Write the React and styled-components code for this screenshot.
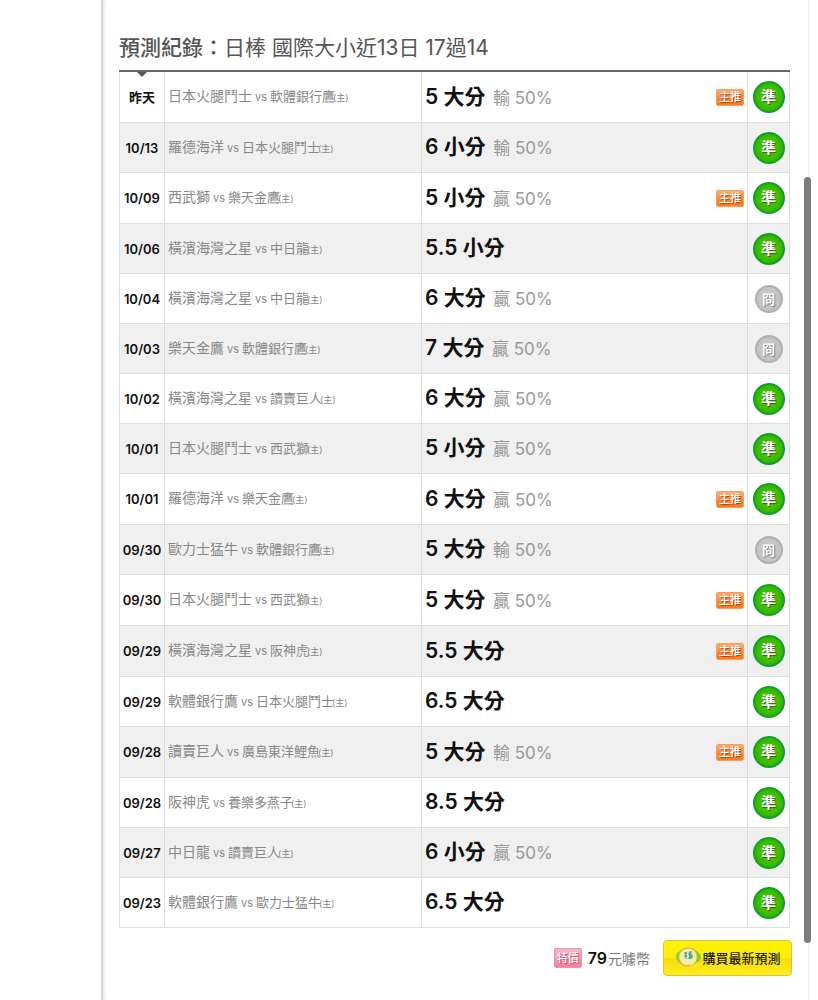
import styled, { createGlobalStyle } from "styled-components";

const GlobalStyle = createGlobalStyle`
  * {
    box-sizing: border-box;
  }
  body {
    margin: 0;
    background-color: #fff;
    font-family: Inter, "Noto Sans CJK TC", sans-serif;
  }
`;
const Page = styled.div`
  position: relative;
  min-height: 100vh;
  padding: 0 9px 0 101px;
  display: grid;
`;
const Panel = styled.main`
  border-left: 2px solid #d2d2d2;
  border-right: 1px solid #ededed;
  box-shadow: inset 3px 0 3px -1px #ececec;
  padding: 34px 18px 24px 16px;
`;
const Title = styled.h1`
  margin: 0;
  height: 36px;
  color: #555;
  font-size: 21px;
  line-height: 28px;
  font-weight: 400;
`;
const Strong = styled.strong`
  font-weight: 500;
`;
const TableWrap = styled.div`
  position: relative;
  border-top: 2px solid #666;
`;
const Pointer = styled.i`
  position: absolute;
  top: 0;
  left: 18px;
  border: 5px solid transparent;
  border-top-color: #555;
  border-bottom: 0;
`;
const Table = styled.table`
  width: 100%;
  table-layout: fixed;
  border-collapse: separate;
  border-spacing: 0;
  border-left: 1px solid #ddd;
`;
const Col = styled.col`
  width: ${({ $width }) => $width};
`;
const Row = styled.tr`
  height: ${({ $main }) => ($main ? 51 : 50)}px;
  background-color: #fff;
  &:nth-child(even) {
    background-color: #f0f0f0;
  }
`;
const Cell = styled.td`
  padding: 0 3px;
  border-right: 1px solid #ddd;
  border-bottom: 1px solid #ddd;
  line-height: 24px;
  white-space: nowrap;
`;
const DateCell = styled(Cell)`
  padding: 0;
  text-align: center;
  color: #111;
  font-size: 13px;
  font-weight: 600;
`;
const GameCell = styled(Cell)`
  color: #888;
  font-size: 13px;
`;
const Away = styled.span`
  font-size: 14px;
`;
const Versus = styled.small`
  margin: 0 3px;
  font-size: 11px;
`;
const Home = styled.small`
  margin-left: -2px;
  font-size: 9px;
`;
const PickRow = styled.div`
  display: flex;
  align-items: center;
  justify-content: space-between;
`;
const Pick = styled.strong`
  color: #111;
  font-size: 21px;
  font-weight: 600;
`;
const Odds = styled.span`
  margin-left: 3px;
  color: #999;
  font-size: 17px;
`;
const MarkCell = styled(Cell)`
  padding: 0;
`;
const Mark = styled.span`
  display: grid;
  place-items: center;
  margin: 0 auto;
  width: ${({ $hit }) => ($hit ? 32 : 28)}px;
  height: ${({ $hit }) => ($hit ? 32 : 28)}px;
  border: 2px solid ${({ $hit }) => ($hit ? "#0fa02c" : "#b0b0b0")};
  border-radius: 50%;
  background: ${({ $hit }) =>
    $hit
      ? "radial-gradient(circle, #55c800 20%, #35b800 65%, #119c22)"
      : "radial-gradient(circle, #c9c9c9 30%, #bdbdbd)"};
  color: #fff;
  font-size: ${({ $hit }) => ($hit ? 15 : 13)}px;
  font-weight: 700;
  line-height: 16px;
  text-shadow: 1px 1px 1px ${({ $hit }) => ($hit ? "#33572a" : "#777")};
`;
const Tag = styled.span`
  display: grid;
  place-items: center;
  width: 28px;
  height: ${({ $sale }) => ($sale ? 20 : 17)}px;
  border: 1px solid ${({ $sale }) => ($sale ? "#f291ac" : "#f0a067")};
  border-radius: 2px;
  background: ${({ $sale }) =>
    $sale
      ? "linear-gradient(#ffb3c6, #f97f9f)"
      : "linear-gradient(#ffad70, #ff8a3c 50%, #ff7a1a)"};
  color: #fff;
  font-size: 11px;
  font-weight: 500;
  line-height: 14px;
  text-shadow: 1px 1px 1px ${({ $sale }) => ($sale ? "#a3455f" : "#934a1c")};
`;
const Footer = styled.footer`
  display: flex;
  align-items: center;
  justify-content: flex-end;
  margin-top: 12px;
  margin-right: -2px;
`;
const Price = styled.p`
  margin: 0 13px 0 6px;
  color: #777;
  font-size: 14px;
  line-height: 20px;
`;
const Amount = styled.strong`
  margin-right: 1px;
  color: #111;
  font-size: 16px;
  font-weight: 600;
`;
const BuyButton = styled.button`
  display: flex;
  align-items: center;
  justify-content: center;
  gap: 1px;
  width: 129px;
  height: 36px;
  padding: 0 0 2px 1px;
  border: 1px solid #d8c437;
  border-radius: 4px;
  background: linear-gradient(#fff200, #ffec0d 50%, #f8dc10 52%, #ffed1a);
  color: #222;
  font-family: inherit;
  font-size: 13px;
  font-weight: 500;
  cursor: pointer;
`;
const ScrollThumb = styled.div`
  position: absolute;
  top: 177px;
  right: 7px;
  width: 7px;
  height: 766px;
  border-radius: 4px;
  background-color: #7d7d7d;
`;

const records = [
  { date: "昨天", away: "日本火腿鬥士", home: "軟體銀行鷹", pick: "5 大分", odds: "輸 50%", main: true, hit: true },
  { date: "10/13", away: "羅德海洋", home: "日本火腿鬥士", pick: "6 小分", odds: "輸 50%", hit: true },
  { date: "10/09", away: "西武獅", home: "樂天金鷹", pick: "5 小分", odds: "贏 50%", main: true, hit: true },
  { date: "10/06", away: "橫濱海灣之星", home: "中日龍", pick: "5.5 小分", hit: true },
  { date: "10/04", away: "橫濱海灣之星", home: "中日龍", pick: "6 大分", odds: "贏 50%" },
  { date: "10/03", away: "樂天金鷹", home: "軟體銀行鷹", pick: "7 大分", odds: "贏 50%" },
  { date: "10/02", away: "橫濱海灣之星", home: "讀賣巨人", pick: "6 大分", odds: "贏 50%", hit: true },
  { date: "10/01", away: "日本火腿鬥士", home: "西武獅", pick: "5 小分", odds: "贏 50%", hit: true },
  { date: "10/01", away: "羅德海洋", home: "樂天金鷹", pick: "6 大分", odds: "贏 50%", main: true, hit: true },
  { date: "09/30", away: "歐力士猛牛", home: "軟體銀行鷹", pick: "5 大分", odds: "輸 50%" },
  { date: "09/30", away: "日本火腿鬥士", home: "西武獅", pick: "5 大分", odds: "贏 50%", main: true, hit: true },
  { date: "09/29", away: "橫濱海灣之星", home: "阪神虎", pick: "5.5 大分", main: true, hit: true },
  { date: "09/29", away: "軟體銀行鷹", home: "日本火腿鬥士", pick: "6.5 大分", hit: true },
  { date: "09/28", away: "讀賣巨人", home: "廣島東洋鯉魚", pick: "5 大分", odds: "輸 50%", main: true, hit: true },
  { date: "09/28", away: "阪神虎", home: "養樂多燕子", pick: "8.5 大分", hit: true },
  { date: "09/27", away: "中日龍", home: "讀賣巨人", pick: "6 小分", odds: "贏 50%", hit: true },
  { date: "09/23", away: "軟體銀行鷹", home: "歐力士猛牛", pick: "6.5 大分", hit: true },
];

function CoinIcon() {
  return (
    <svg width="26" height="22" viewBox="0 0 26 22" aria-hidden="true">
      <path d="M6 4Q-2 9 2 14Q5 19 11 19Q5 15 7 4Z" fill="#8ccb3e" />
      <path d="M20 4Q28 9 25 14Q21 18 15 18Q21 14 19 5Z" fill="#74c93d" />
      <circle cx="13" cy="11" r="9" fill="#f7ec9c" stroke="#e8c75a" />
      <circle cx="13" cy="10" r="6" fill="#e9f0c0" />
      <path
        d="M9 7h3M11 6v7M9 10h3M14 6h3M13 8h4M14 10h3M13 12h4M15 6v7M17 9v3"
        fill="none"
        stroke="#2f8f7c"
      />
      <path d="M5 6Q8 2 13 2Q17 2 20 4M6 17Q9 21 15 19" fill="none" stroke="#f3a05c" />
    </svg>
  );
}

function Record({ record }) {
  return (
    <Row $main={record.main}>
      <DateCell>{record.date}</DateCell>
      <GameCell>
        <Away>{record.away}</Away>
        <Versus>vs</Versus>
        {record.home}
        <Home>(主)</Home>
      </GameCell>
      <Cell>
        <PickRow>
          <span>
            <Pick>{record.pick}</Pick> {record.odds && <Odds>{record.odds}</Odds>}
          </span>
          {record.main && <Tag>主推</Tag>}
        </PickRow>
      </Cell>
      <MarkCell>
        <Mark $hit={record.hit}>{record.hit ? "準" : "冏"}</Mark>
      </MarkCell>
    </Row>
  );
}

export default function App() {
  return (
    <>
      <GlobalStyle />
      <Page>
        <Panel>
          <Title>
            <Strong>預測紀錄：</Strong>日棒 國際大小近13日 17過14
          </Title>
          <TableWrap>
            <Table>
              <colgroup>
                <Col $width="45px" />
                <Col $width="257px" />
                <Col />
                <Col $width="42px" />
              </colgroup>
              <tbody>
                {records.map((record, i) => (
                  <Record key={i} record={record} />
                ))}
              </tbody>
            </Table>
            <Pointer />
          </TableWrap>
          <Footer>
            <Tag $sale>特價</Tag>
            <Price>
              <Amount>79</Amount>元噱幣
            </Price>
            <BuyButton type="button">
              <CoinIcon />
              購買最新預測
            </BuyButton>
          </Footer>
        </Panel>
        <ScrollThumb />
      </Page>
    </>
  );
}
